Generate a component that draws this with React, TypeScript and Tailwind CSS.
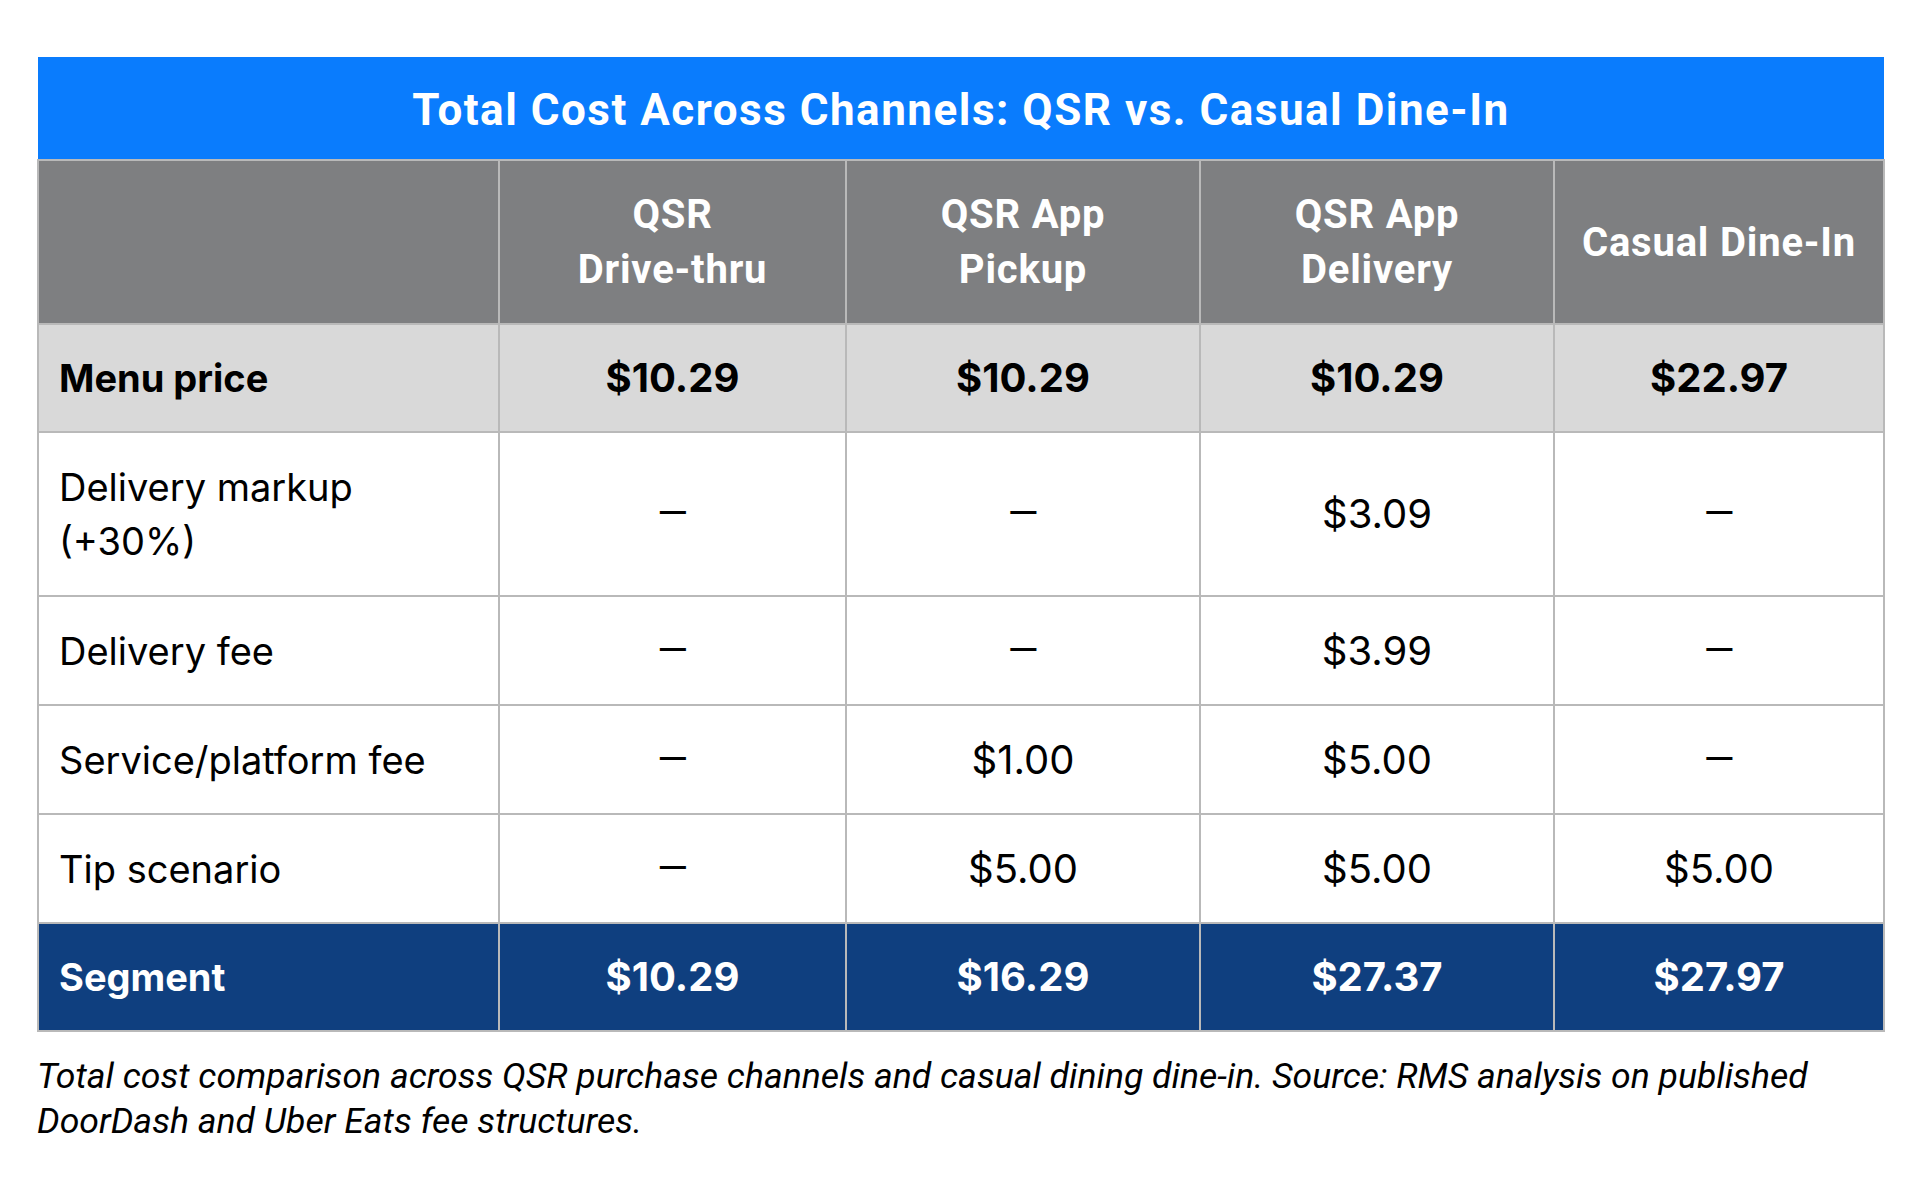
const columns = ["QSR\nDrive-thru", "QSR App\nPickup", "QSR App\nDelivery", "Casual Dine-In"]

type Row = {
  label: string
  values: string[]
  kind: "price" | "plain" | "total"
  tall?: boolean
}

const rows: Row[] = [
  { label: "Menu price", values: ["$10.29", "$10.29", "$10.29", "$22.97"], kind: "price" },
  { label: "Delivery markup\n(+30%)", values: ["—", "—", "$3.09", "—"], kind: "plain", tall: true },
  { label: "Delivery fee", values: ["—", "—", "$3.99", "—"], kind: "plain" },
  { label: "Service/platform fee", values: ["—", "$1.00", "$5.00", "—"], kind: "plain" },
  { label: "Tip scenario", values: ["—", "$5.00", "$5.00", "$5.00"], kind: "plain" },
  { label: "Segment", values: ["$10.29", "$16.29", "$27.37", "$27.97"], kind: "total" },
]

const rowStyles = {
  price: "bg-[#d9d9d9] text-black font-bold h-[108px]",
  plain: "bg-white text-black font-normal",
  total: "bg-[#0f3f7f] text-white font-bold h-[108px]",
}

export default function App() {
  return (
    <div className="min-h-screen bg-white px-[37px] pt-[57px] font-['Roboto',sans-serif]">
      <table className="w-[1846px] table-fixed border-collapse">
        <colgroup>
          <col className="w-[461px]" />
          <col className="w-[347px]" />
          <col className="w-[354px]" />
          <col className="w-[354px]" />
          <col className="w-[330px]" />
        </colgroup>
        <thead>
          <tr>
            <th
              colSpan={5}
              className="h-[103px] border-2 border-[#b9b9b9] border-t-0 border-x-0 bg-[#0a7cfd] pt-[4px] text-center text-[44px] font-bold tracking-[1.5px] text-white"
            >
              Total Cost Across Channels: QSR vs. Casual Dine-In
            </th>
          </tr>
          <tr className="h-[164px] bg-[#7e7f81]">
            <th className="border-2 border-[#b9b9b9]" />
            {columns.map((c) => (
              <th
                key={c}
                className="whitespace-pre-line border-2 border-[#b9b9b9] text-center text-[40px] font-bold leading-[55px] tracking-[0.8px] text-white"
              >
                {c}
              </th>
            ))}
          </tr>
        </thead>
        <tbody className="font-['Inter',sans-serif]">
          {rows.map((r) => (
            <tr
              key={r.label}
              className={`${rowStyles[r.kind]} ${r.tall ? "h-[164px]" : r.kind === "plain" ? "h-[109px]" : ""}`}
            >
              <td className="whitespace-pre-line border-2 border-[#b9b9b9] pl-[20px] text-left text-[38px] leading-[54px]">
                {r.label}
              </td>
              {r.values.map((v, i) => (
                <td
                  key={i}
                  className={`border-2 border-[#b9b9b9] text-center text-[40px] leading-[54px] ${v === "—" ? "font-['Roboto',sans-serif]" : ""}`}
                >
                  {v}
                </td>
              ))}
            </tr>
          ))}
        </tbody>
      </table>
      <p className="mt-[22px] w-[1846px] text-[35.6px] italic leading-[45px] text-black">
        Total cost comparison across QSR purchase channels and casual dining dine-in. Source: RMS analysis on published DoorDash and Uber Eats fee structures.
      </p>
    </div>
  )
}
